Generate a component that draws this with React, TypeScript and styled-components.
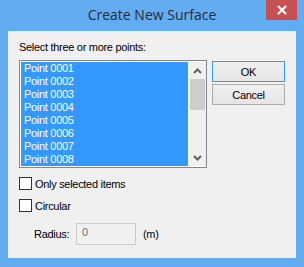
import React from "react";
import styled, { createGlobalStyle } from "styled-components";

const points = [
  "Point 0001",
  "Point 0002",
  "Point 0003",
  "Point 0004",
  "Point 0005",
  "Point 0006",
  "Point 0007",
  "Point 0008",
];

function App() {
  return (
    <>
      <GlobalStyle />
      <Window>
        <TitleBar>
          <span />
          <Title>Create New Surface</Title>
          <CloseButton>
            <svg width="10" height="10" viewBox="0 0 10 10">
              <path d="M1 1 L9 9 M9 1 L1 9" stroke="#fff" strokeWidth="2.2" />
            </svg>
          </CloseButton>
        </TitleBar>
        <Client>
          <Label>Select three or more points:</Label>
          <TopRow>
            <ListBox>
              <Items>
                {points.map((p) => (
                  <Item key={p}>{p}</Item>
                ))}
              </Items>
              <ScrollBar>
                <ArrowBox>
                  <svg width="9" height="6" viewBox="0 0 9 6">
                    <path d="M1 5 L4.5 1.5 L8 5" stroke="#606060" strokeWidth="2" fill="none" />
                  </svg>
                </ArrowBox>
                <Thumb />
                <Track />
                <ArrowBox>
                  <svg width="9" height="6" viewBox="0 0 9 6">
                    <path d="M1 1 L4.5 4.5 L8 1" stroke="#606060" strokeWidth="2" fill="none" />
                  </svg>
                </ArrowBox>
              </ScrollBar>
            </ListBox>
            <Buttons>
              <Button $default>OK</Button>
              <Button>Cancel</Button>
            </Buttons>
          </TopRow>
          <CheckRow $top={9}>
            <Box />
            <span>Only selected items</span>
          </CheckRow>
          <CheckRow $top={9}>
            <Box />
            <span>Circular</span>
          </CheckRow>
          <RadiusRow>
            <RadiusLabel>Radius:</RadiusLabel>
            <Field>0</Field>
            <span>(m)</span>
          </RadiusRow>
        </Client>
      </Window>
    </>
  );
}

export default App;

const GlobalStyle = createGlobalStyle`
  body {
    margin: 0;
    font-family: "Liberation Sans", Arial, sans-serif;
  }
`;

const Window = styled.div`
  width: 304px;
  height: 267px;
  background: #62acf2;
  display: flex;
  flex-direction: column;
  box-sizing: border-box;
`;

const TitleBar = styled.div`
  height: 31px;
  display: grid;
  grid-template-columns: 1fr auto 1fr;
  align-items: start;
`;

const Title = styled.div`
  font-family: "Open Sans", "Noto Sans", sans-serif;
  font-size: 14px;
  color: #2b2b2b;
  line-height: 20px;
  margin-top: 5px;
`;

const CloseButton = styled.div`
  justify-self: end;
  margin-right: 7px;
  width: 31px;
  height: 20px;
  background: #c75050;
  display: flex;
  align-items: center;
  justify-content: center;
`;

const Client = styled.div`
  flex: 1;
  margin: 0 8px 9px 8px;
  background: #f0f0f0;
  padding: 10px 11px 0 11px;
  font-size: 11px;
  letter-spacing: -0.3px;
  color: #000;
  display: flex;
  flex-direction: column;
`;

const Label = styled.div`
  line-height: 13px;
  height: 13px;
  margin-bottom: 6px;
`;

const TopRow = styled.div`
  display: flex;
  align-items: flex-start;
  gap: 5px;
`;

const ListBox = styled.div`
  width: 188px;
  height: 108px;
  box-sizing: border-box;
  border: 1px solid #828790;
  background: #fff;
  padding: 1px 0 1px 1px;
  display: flex;
`;

const Items = styled.div`
  flex: 1;
  background: #3399ff;
  margin-right: 1px;
`;

const Item = styled.div`
  height: 13px;
  line-height: 13px;
  color: #fff;
  padding-left: 3px;
`;

const ScrollBar = styled.div`
  width: 17px;
  background: #f0f0f0;
  display: flex;
  flex-direction: column;
`;

const ArrowBox = styled.div`
  height: 17px;
  display: flex;
  align-items: center;
  justify-content: center;
`;

const Thumb = styled.div`
  height: 31px;
  margin: 0 1px;
  background: #cdcdcd;
`;

const Track = styled.div`
  flex: 1;
`;

const Buttons = styled.div`
  margin-top: 1px;
  display: flex;
  flex-direction: column;
  gap: 2px;
`;

const Button = styled.div<{ $default?: boolean }>`
  width: 73px;
  height: 21px;
  box-sizing: border-box;
  border: 1px solid ${(p) => (p.$default ? "#3399ff" : "#acacac")};
  background: linear-gradient(#f0f0f0, #e5e5e5);
  display: flex;
  align-items: center;
  justify-content: center;
  color: #000;
`;

const CheckRow = styled.div<{ $top: number }>`
  margin-top: ${(p) => p.$top}px;
  display: flex;
  align-items: center;
  gap: 3px;
  height: 13px;
`;

const Box = styled.div`
  width: 13px;
  height: 13px;
  box-sizing: border-box;
  border: 1px solid #333;
  background: #fff;
`;

const RadiusRow = styled.div`
  margin-top: 11px;
  padding-left: 15px;
  display: flex;
  align-items: center;
  color: #000;
`;

const RadiusLabel = styled.span`
  width: 42px;
`;

const Field = styled.div`
  width: 60px;
  height: 22px;
  box-sizing: border-box;
  border: 1px solid #cccccc;
  background: #f0f0f0;
  color: #6d6d6d;
  padding: 2px 5px;
  margin-right: 7px;
`;
